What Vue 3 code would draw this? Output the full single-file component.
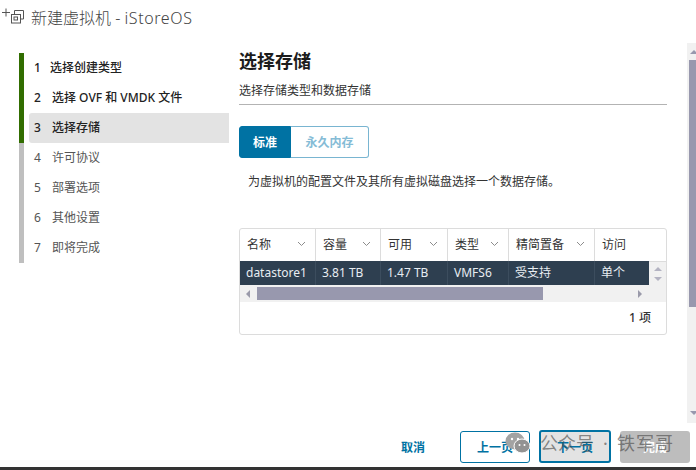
<template>
  <div class="wizard">
    <header class="title-bar">
      <svg class="title-icon" width="24" height="24" viewBox="0 0 24 24" fill="none" stroke="#555" stroke-width="1">
        <path d="M2 8.500h8M6 4.500v8" />
        <path d="M14.500 10V6.500h9v8.500h-3" />
        <rect x="11.500" y="10.500" width="9" height="8.500" fill="#fff" />
        <rect x="14" y="13" width="3.500" height="3" />
      </svg>
      <span class="title-text">新建虚拟机 - <span class="title-name">iStoreOS</span></span>
    </header>

    <div class="body">
      <nav class="steps">
        <div
          v-for="step in steps"
          :key="step.num"
          class="step"
          :class="{ done: step.num <= 3, current: step.num === 3 }"
        >
          <div class="step-label">
            <span class="step-num">{{ step.num }}</span>
            <span :style="{ marginLeft: step.gap + 'px' }">{{ step.name }}</span>
          </div>
        </div>
      </nav>

      <main class="content">
        <h2 class="page-title">选择存储</h2>
        <p class="page-sub">选择存储类型和数据存储</p>

        <div class="tabs">
          <button class="tab active">标准</button>
          <button class="tab">永久内存</button>
        </div>

        <p class="hint">为虚拟机的配置文件及其所有虚拟磁盘选择一个数据存储。</p>

        <div class="grid">
          <div class="grid-head">
            <div
              v-for="col in columns"
              :key="col.name"
              class="head-cell"
              :style="{ width: col.width + 'px' }"
            >
              <span>{{ col.name }}</span>
              <svg v-if="col.sort" width="9" height="6" viewBox="0 0 9 6" fill="none" stroke="#8c8c8c" stroke-width="1">
                <path d="M1 1l3.500 3.500L8 1" />
              </svg>
            </div>
          </div>

          <div class="grid-row-wrap">
            <div class="grid-row">
              <div
                v-for="col in columns"
                :key="col.name"
                class="row-cell"
                :style="{ width: col.width + 'px' }"
              >
                {{ col.value }}
              </div>
            </div>
            <div class="v-scroll">
              <span class="arrow-up"></span>
              <span class="arrow-down"></span>
            </div>
          </div>

          <div class="h-scroll">
            <span class="arrow-left"></span>
            <div class="h-track"><div class="h-thumb"></div></div>
            <span class="arrow-right"></span>
          </div>

          <div class="grid-foot">1 项</div>
        </div>
      </main>

      <aside class="page-scroll">
        <span class="page-arrow-up"></span>
        <div class="page-thumb"></div>
        <span class="page-arrow-down"></span>
      </aside>
    </div>

    <footer class="actions">
      <button class="btn link">取消</button>
      <button class="btn outline">上一页</button>
      <button class="btn focus">下一页</button>
      <button class="btn disabled">完成</button>
    </footer>
    <div class="bottom-edge"></div>

    <div class="watermark">
      <svg width="26" height="22" viewBox="0 0 26 22">
        <ellipse cx="10" cy="9" rx="9.500" ry="8.500" fill="#a3a3a3" />
        <ellipse cx="17" cy="14" rx="8" ry="7" fill="#939393" stroke="#fff" stroke-width="1" />
        <circle cx="7" cy="7" r="1.200" fill="#fff" />
        <circle cx="13" cy="7" r="1.200" fill="#fff" />
        <circle cx="14.500" cy="13" r="1" fill="#fff" />
        <circle cx="19.500" cy="13" r="1" fill="#fff" />
      </svg>
      <span class="wm-text">公众号</span>
      <span class="wm-dot">·</span>
      <span class="wm-name">铁军哥</span>
    </div>
  </div>
</template>

<script setup>
const steps = [
  { num: 1, name: '选择创建类型', gap: 9 },
  { num: 2, name: '选择 OVF 和 VMDK 文件', gap: 11 },
  { num: 3, name: '选择存储', gap: 11 },
  { num: 4, name: '许可协议', gap: 11 },
  { num: 5, name: '部署选项', gap: 11 },
  { num: 6, name: '其他设置', gap: 11 },
  { num: 7, name: '即将完成', gap: 11 },
]

const columns = [
  { name: '名称', value: 'datastore1', width: 76, sort: true },
  { name: '容量', value: '3.81 TB', width: 65, sort: true },
  { name: '可用', value: '1.47 TB', width: 67, sort: true },
  { name: '类型', value: 'VMFS6', width: 61, sort: true },
  { name: '精简置备', value: '受支持', width: 86, sort: true },
  { name: '访问', value: '单个', width: 54, sort: false },
]
</script>

<style>
html,
body {
  margin: 0;
  background: #fff;
}
</style>

<style scoped>
.wizard {
  position: relative;
  width: 696px;
  height: 470px;
  overflow: hidden;
  background: #fff;
  font-family: "Noto Sans", "Noto Sans CJK SC", sans-serif;
  color: #2b2b2b;
}

.title-bar {
  height: 43px;
  display: flex;
  align-items: flex-start;
  padding-top: 4px;
  box-sizing: border-box;
}

.title-icon {
  flex: none;
}

.title-text {
  margin-left: 7px;
  margin-top: 3px;
  font-size: 16px;
  line-height: 22px;
  font-weight: 300;
  color: #444;
}

.title-name {
  letter-spacing: 0.6px;
}

.body {
  display: flex;
  height: 380px;
}

.steps {
  width: 210px;
  margin: 10px 0 0 19px;
  flex: none;
}

.step {
  height: 30px;
  border-left: 5px solid #bfbfbf;
  box-sizing: border-box;
  font-size: 12px;
  color: #555;
}

.step.done {
  border-left-color: #316d00;
  color: #222;
}

.step-label {
  height: 30px;
  display: flex;
  align-items: center;
  box-sizing: border-box;
  padding: 0 0 2px 10px;
  border-radius: 3px 0 0 3px;
}

.step.done .step-label {
  font-weight: 500;
}

.step.current .step-label {
  margin-left: 5px;
  padding-left: 5px;
  background: #e3e3e3;
}

.step-num {
  width: 7px;
}

.content {
  width: 428px;
  margin: 8px 0 0 10px;
  flex: none;
}

.page-title {
  margin: 0;
  font-size: 18px;
  line-height: 20px;
  font-weight: 700;
  color: #1c1c1c;
}

.page-sub {
  margin: 0;
  padding: 11px 0 4px;
  line-height: 18px;
  font-size: 12px;
  color: #333;
  border-bottom: 1px solid #b3b3b3;
}

.tabs {
  display: flex;
  margin-top: 21px;
}

.tab {
  height: 32px;
  padding: 0;
  flex: none;
  width: 78px;
  background: #fff;
  border: 1px solid #79b5d1;
  border-left: none;
  border-radius: 0 3px 3px 0;
  font-family: inherit;
  font-size: 12px;
  font-weight: 700;
  color: #85bcd6;
}

.tab.active {
  width: 52px;
  background: #0072a3;
  border: 1px solid #0072a3;
  border-radius: 3px 0 0 3px;
  color: #fff;
}

.hint {
  margin: 15px 0 0 9px;
  font-size: 12px;
  line-height: 18px;
  color: #333;
}

.grid {
  margin-top: 37px;
  height: 107px;
  box-sizing: border-box;
  border: 1px solid #dcdcdc;
  border-radius: 3px;
  overflow: hidden;
}

.grid-head {
  display: flex;
  height: 32px;
}

.head-cell {
  display: flex;
  align-items: center;
  justify-content: space-between;
  box-sizing: border-box;
  padding: 0 9px 2px 7px;
  border-right: 1px solid #dcdcdc;
  font-size: 12px;
  color: #333;
  flex: none;
}

.head-cell:last-child {
  border-right: none;
}

.grid-row-wrap {
  display: flex;
  height: 24px;
}

.grid-row {
  display: flex;
  width: 409px;
  overflow: hidden;
  background: #2e3f50;
  flex: none;
}

.row-cell {
  flex: none;
  display: flex;
  align-items: center;
  box-sizing: border-box;
  padding: 0 6px 2px;
  border-right: 1px solid #3c4d5e;
  color: #e8edf2;
  font-size: 12px;
}

.row-cell:last-child {
  border-right: none;
}

.v-scroll {
  flex: 1;
  background: #f1f1f1;
  border-top: 1px solid #dcdcdc;
  display: flex;
  flex-direction: column;
  align-items: center;
  justify-content: center;
  gap: 6px;
}

.arrow-up,
.arrow-down,
.page-arrow-up,
.page-arrow-down {
  width: 0;
  height: 0;
  flex: none;
  border-left: 4px solid transparent;
  border-right: 4px solid transparent;
}

.arrow-up {
  border-bottom: 4px solid #b3b3c2;
}

.arrow-down {
  border-top: 4px solid #b3b3c2;
}

.h-scroll {
  display: flex;
  align-items: center;
  height: 17px;
  background: #f1f1f1;
}

.h-track {
  flex: 1;
  height: 13px;
}

.h-thumb {
  width: 286px;
  height: 13px;
  background: #9898ae;
}

.arrow-left,
.arrow-right {
  width: 0;
  height: 0;
  border-top: 4px solid transparent;
  border-bottom: 4px solid transparent;
}

.arrow-left {
  margin: 0 7px 0 6px;
  border-right: 4px solid #9a9aaa;
}

.arrow-right {
  margin: 0 24px 0 7px;
  border-left: 4px solid #9a9aaa;
}

.grid-foot {
  height: 32px;
  line-height: 32px;
  text-align: right;
  padding-right: 15px;
  font-size: 12px;
  font-weight: 500;
  color: #333;
}

.page-scroll {
  display: flex;
  flex-direction: column;
  width: 9px;
  margin-left: 20px;
  padding-top: 7px;
  box-sizing: border-box;
  background: #f1f1f1;
  overflow: hidden;
  flex: none;
}

.page-arrow-up {
  margin-left: 3px;
  border-bottom: 4px solid #9898ae;
}

.page-arrow-down {
  margin: auto 0 8px 3px;
  border-top: 4px solid #9898ae;
}

.page-thumb {
  height: 247px;
  margin: 6px 0 0 2px;
  background: #9898ae;
}

.actions {
  display: flex;
  align-items: flex-start;
  justify-content: flex-end;
  gap: 9px;
  height: 44px;
  padding: 8px 6px 0 0;
  box-sizing: border-box;
}

.btn {
  height: 32px;
  padding: 0;
  background: #fff;
  border-radius: 3px;
  font-family: inherit;
  font-size: 12px;
  font-weight: 700;
  color: #0072a3;
  box-sizing: border-box;
  flex: none;
}

.btn.link {
  width: 60px;
  margin-right: 8px;
  border: none;
}

.btn.outline {
  width: 70px;
  border: 1px solid #0072a3;
}

.btn.focus {
  width: 72px;
  height: 33px;
  margin-top: -1px;
  border: 2px solid #0072a3;
  background: #e3e3e3;
}

.btn.disabled {
  width: 70px;
  border: none;
  background: #bdbdbd;
  color: #fff;
}

.bottom-edge {
  height: 3px;
  background: #333;
}

.watermark {
  position: absolute;
  left: 505px;
  top: 431px;
  display: flex;
  align-items: center;
  font-size: 18px;
  line-height: 24px;
  color: rgba(70, 70, 70, 0.62);
  white-space: nowrap;
}

.wm-text {
  margin-left: 9px;
}

.wm-dot {
  width: 23px;
  text-align: center;
}

.wm-name {
  letter-spacing: 1px;
}
</style>
